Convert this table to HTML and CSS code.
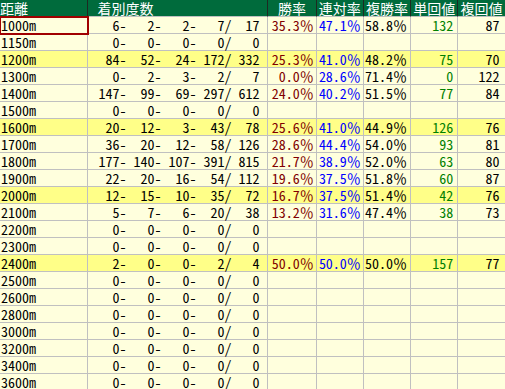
FILE: index.html
```html
<!DOCTYPE html>
<html lang="ja">
<head>
<meta charset="utf-8">
<title>距離別成績</title>
<link rel="stylesheet" href="styles.css">
</head>
<body>
<table class="grid">
  <colgroup>
    <col class="c-dist"><col class="c-rec"><col class="c-win"><col class="c-rate"><col class="c-rate"><col class="c-rate"><col class="c-rate"><col class="c-extra">
  </colgroup>
  <thead>
    <tr>
      <th class="h-dist">距離</th>
      <th class="h-rec">着別度数</th>
      <th>勝率</th>
      <th>連対率</th>
      <th>複勝率</th>
      <th>単回値</th>
      <th>複回値</th>
      <th></th>
    </tr>
  </thead>
  <tbody>
    <tr><td class="dist sel">1000m</td><td class="rec">  6-   2-   2-   7/  17</td><td class="win">35.3％</td><td class="ren">47.1％</td><td class="fuk">58.8％</td><td class="tan">132</td><td class="fkv">87</td><td></td></tr>
    <tr><td class="dist">1150m</td><td class="rec">  0-   0-   0-   0/   0</td><td class="win"></td><td class="ren"></td><td class="fuk"></td><td class="tan"></td><td class="fkv"></td><td></td></tr>
    <tr class="hl"><td class="dist">1200m</td><td class="rec"> 84-  52-  24- 172/ 332</td><td class="win">25.3％</td><td class="ren">41.0％</td><td class="fuk">48.2％</td><td class="tan">75</td><td class="fkv">70</td><td></td></tr>
    <tr><td class="dist">1300m</td><td class="rec">  0-   2-   3-   2/   7</td><td class="win">0.0％</td><td class="ren">28.6％</td><td class="fuk">71.4％</td><td class="tan">0</td><td class="fkv">122</td><td></td></tr>
    <tr><td class="dist">1400m</td><td class="rec">147-  99-  69- 297/ 612</td><td class="win">24.0％</td><td class="ren">40.2％</td><td class="fuk">51.5％</td><td class="tan">77</td><td class="fkv">84</td><td></td></tr>
    <tr><td class="dist">1500m</td><td class="rec">  0-   0-   0-   0/   0</td><td class="win"></td><td class="ren"></td><td class="fuk"></td><td class="tan"></td><td class="fkv"></td><td></td></tr>
    <tr class="hl"><td class="dist">1600m</td><td class="rec"> 20-  12-   3-  43/  78</td><td class="win">25.6％</td><td class="ren">41.0％</td><td class="fuk">44.9％</td><td class="tan">126</td><td class="fkv">76</td><td></td></tr>
    <tr><td class="dist">1700m</td><td class="rec"> 36-  20-  12-  58/ 126</td><td class="win">28.6％</td><td class="ren">44.4％</td><td class="fuk">54.0％</td><td class="tan">93</td><td class="fkv">81</td><td></td></tr>
    <tr><td class="dist">1800m</td><td class="rec">177- 140- 107- 391/ 815</td><td class="win">21.7％</td><td class="ren">38.9％</td><td class="fuk">52.0％</td><td class="tan">63</td><td class="fkv">80</td><td></td></tr>
    <tr><td class="dist">1900m</td><td class="rec"> 22-  20-  16-  54/ 112</td><td class="win">19.6％</td><td class="ren">37.5％</td><td class="fuk">51.8％</td><td class="tan">60</td><td class="fkv">87</td><td></td></tr>
    <tr class="hl"><td class="dist">2000m</td><td class="rec"> 12-  15-  10-  35/  72</td><td class="win">16.7％</td><td class="ren">37.5％</td><td class="fuk">51.4％</td><td class="tan">42</td><td class="fkv">76</td><td></td></tr>
    <tr><td class="dist">2100m</td><td class="rec">  5-   7-   6-  20/  38</td><td class="win">13.2％</td><td class="ren">31.6％</td><td class="fuk">47.4％</td><td class="tan">38</td><td class="fkv">73</td><td></td></tr>
    <tr><td class="dist">2200m</td><td class="rec">  0-   0-   0-   0/   0</td><td class="win"></td><td class="ren"></td><td class="fuk"></td><td class="tan"></td><td class="fkv"></td><td></td></tr>
    <tr><td class="dist">2300m</td><td class="rec">  0-   0-   0-   0/   0</td><td class="win"></td><td class="ren"></td><td class="fuk"></td><td class="tan"></td><td class="fkv"></td><td></td></tr>
    <tr class="hl"><td class="dist">2400m</td><td class="rec">  2-   0-   0-   2/   4</td><td class="win">50.0％</td><td class="ren">50.0％</td><td class="fuk">50.0％</td><td class="tan">157</td><td class="fkv">77</td><td></td></tr>
    <tr><td class="dist">2500m</td><td class="rec">  0-   0-   0-   0/   0</td><td class="win"></td><td class="ren"></td><td class="fuk"></td><td class="tan"></td><td class="fkv"></td><td></td></tr>
    <tr><td class="dist">2600m</td><td class="rec">  0-   0-   0-   0/   0</td><td class="win"></td><td class="ren"></td><td class="fuk"></td><td class="tan"></td><td class="fkv"></td><td></td></tr>
    <tr><td class="dist">2800m</td><td class="rec">  0-   0-   0-   0/   0</td><td class="win"></td><td class="ren"></td><td class="fuk"></td><td class="tan"></td><td class="fkv"></td><td></td></tr>
    <tr><td class="dist">3000m</td><td class="rec">  0-   0-   0-   0/   0</td><td class="win"></td><td class="ren"></td><td class="fuk"></td><td class="tan"></td><td class="fkv"></td><td></td></tr>
    <tr><td class="dist">3200m</td><td class="rec">  0-   0-   0-   0/   0</td><td class="win"></td><td class="ren"></td><td class="fuk"></td><td class="tan"></td><td class="fkv"></td><td></td></tr>
    <tr><td class="dist">3400m</td><td class="rec">  0-   0-   0-   0/   0</td><td class="win"></td><td class="ren"></td><td class="fuk"></td><td class="tan"></td><td class="fkv"></td><td></td></tr>
    <tr><td class="dist">3600m</td><td class="rec">  0-   0-   0-   0/   0</td><td class="win"></td><td class="ren"></td><td class="fuk"></td><td class="tan"></td><td class="fkv"></td><td></td></tr>
  </tbody>
</table>
</body>
</html>
```
FILE: styles.css
```css
html, body {
  margin: 0;
  padding: 0;
  overflow: hidden;
  background: #ffffff;
}

.grid {
  border-collapse: separate;
  border-spacing: 0;
  table-layout: fixed;
  width: 570px;
  font-family: "Noto Sans Mono CJK JP", "Noto Sans CJK JP", monospace;
  font-size: 14px;
  line-height: 16px;
  color: #000000;
}

.c-dist { width: 88px; }
.c-rec { width: 179px; }
.c-win { width: 48px; }
.c-rate { width: 47px; }
.c-extra { width: 64px; }

.grid th,
.grid td {
  box-sizing: border-box;
  height: 17px;
  padding: 0;
  border-right: 1px solid #c0c0c0;
  border-bottom: 1px solid #c0c0c0;
  white-space: pre;
  vertical-align: middle;
}

.grid th {
  background: #006b3c;
  color: #ffffff;
  font-weight: normal;
  text-align: center;
  border-right-color: #1e2a22;
  border-bottom-color: #c0c0c0;
}

.grid th.h-dist { text-align: left; padding-left: 0; }
.grid th.h-rec { text-align: left; padding-left: 9px; }

.grid td { background: #ffffdd; text-align: right; }
.grid tr.hl td { background: #ffff88; }

.grid td.dist { text-align: left; padding-left: 1px; }
.grid td.rec { padding-right: 8px; }
.grid td.win { color: #800000; padding-right: 2px; }
.grid td.ren { color: #0000ff; padding-right: 2px; }
.grid td.fuk { color: #000000; padding-right: 3px; }
.grid td.tan { color: #008000; padding-right: 4px; }
.grid td.fkv { color: #000000; padding-right: 5px; }

.grid td.sel {
  outline: 2px solid #a00000;
  outline-offset: -1px;
}
```
